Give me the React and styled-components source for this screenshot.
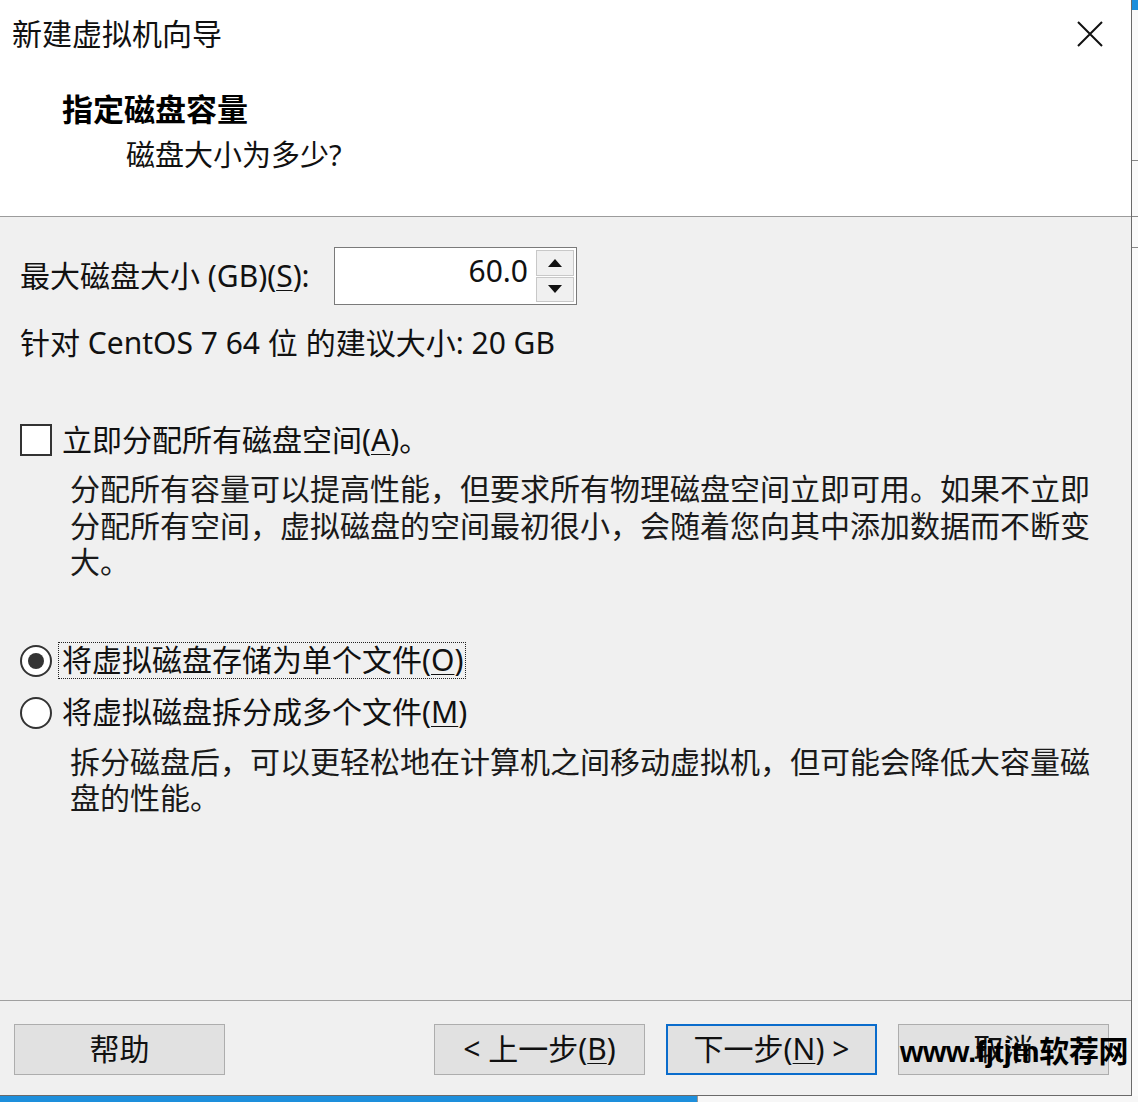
import React from "react";
import styled, { createGlobalStyle } from "styled-components";

const Global = createGlobalStyle`
  html, body { margin: 0; padding: 0; background: #f4f4f4; }
  body { font-family: "Noto Sans", "Noto Sans CJK SC", sans-serif; color: #111; }
  * { box-sizing: border-box; }
`;

const Screen = styled.div`
  width: 1138px;
  height: 1102px;
  display: flex;
  flex-direction: column;
  overflow: hidden;
  background: #f4f4f4;
`;

const Upper = styled.div`
  display: flex;
  height: 1096px;
`;

const Dialog = styled.div`
  position: relative;
  width: 1132px;
  height: 1096px;
  display: flex;
  flex-direction: column;
  background: #f0f0f0;
  border-right: 1px solid #6a6a6a;
  border-bottom: 1px solid #6a6a6a;
`;

const RightEdge = styled.div`
  flex: 1;
  display: flex;
  flex-direction: column;
  background: #fafafa;
`;

const EdgeMark = styled.div`
  height: ${(p) => p.$h}px;
  margin-top: ${(p) => p.$mt}px;
  background: ${(p) => p.$c};
`;

const Header = styled.div`
  height: 217px;
  background: #ffffff;
  border-bottom: 1px solid #9c9c9c;
  display: flex;
  flex-direction: column;
`;

const TitleBar = styled.div`
  height: 70px;
  display: flex;
  align-items: center;
  justify-content: space-between;
  padding: 0 28px 0 12px;
`;

const Title = styled.div`
  font-size: 30px;
  line-height: 36px;
  padding-bottom: 2px;
  color: #111;
`;

const CloseBox = styled.div`
  width: 26px;
  height: 26px;
  display: flex;
  margin-top: -2px;
`;

const PageTitle = styled.div`
  margin: 21px 0 0 62px;
  font-size: 31px;
  line-height: 36px;
  font-weight: 700;
  color: #000;
`;

const PageSubtitle = styled.div`
  margin: 10px 0 0 126px;
  font-size: 29px;
  line-height: 36px;
  color: #111;
`;

const Body = styled.div`
  flex: 1;
  display: flex;
  flex-direction: column;
  padding: 30px 0 0 20px;
`;

const SizeRow = styled.div`
  display: flex;
  align-items: center;
  height: 58px;
`;

const FieldLabel = styled.div`
  width: 314px;
  flex-shrink: 0;
  font-size: 30px;
  line-height: 36px;
  white-space: nowrap;
`;

const Mn = styled.span`
  text-decoration: underline;
  text-underline-offset: 3px;
  text-decoration-thickness: 1px;
`;

const SpinBox = styled.div`
  width: 243px;
  height: 58px;
  display: flex;
  align-items: center;
  background: #fff;
  border: 1px solid #7a7a7a;
  padding: 2px;
`;

const SpinValue = styled.div`
  flex: 1;
  text-align: right;
  padding: 0 8px 10px 0;
  font-size: 30px;
  line-height: 36px;
`;

const SpinButtons = styled.div`
  width: 38px;
  height: 52px;
  display: flex;
  flex-direction: column;
  gap: 1px;
`;

const SpinBtn = styled.div`
  flex: 1;
  display: flex;
  align-items: center;
  justify-content: center;
  background: #f0f0f0;
  border: 1px solid #c8c8c8;
`;

const Line = styled.div`
  margin-top: ${(p) => p.$mt || 0}px;
  margin-left: ${(p) => p.$ml || 0}px;
  font-size: 30px;
  line-height: 36px;
  white-space: nowrap;
`;

const OptionRow = styled.div`
  display: flex;
  align-items: center;
  height: 36px;
  margin-top: ${(p) => p.$mt}px;
`;

const CheckBox = styled.div`
  width: 32px;
  height: 32px;
  border: 2px solid #333;
  background: #fff;
  flex-shrink: 0;
  margin-right: 10px;
`;

const Radio = styled.div`
  width: 32px;
  height: 32px;
  border-radius: 50%;
  border: 2px solid #333;
  background: #fff;
  flex-shrink: 0;
  display: flex;
  align-items: center;
  justify-content: center;
  margin-right: ${(p) => (p.$focus ? 6 : 10)}px;
  &::after {
    content: "";
    width: 16px;
    height: 16px;
    border-radius: 50%;
    background: #333;
    display: ${(p) => (p.$checked ? "block" : "none")};
  }
`;

const OptionLabel = styled.div`
  font-size: 30px;
  line-height: 33px;
  white-space: nowrap;
  padding: 0 2px 2px ${(p) => (p.$focus ? 3 : 0)}px;
  border: ${(p) => (p.$focus ? "1px dotted #222" : "none")};
`;

const Para = styled.div`
  margin: ${(p) => p.$mt}px 0 0 50px;
  width: 1030px;
  font-size: 30px;
  line-height: 36.5px;
  color: #1a1a1a;
`;

const Footer = styled.div`
  height: 95px;
  border-top: 1px solid #a0a0a0;
  display: flex;
  align-items: flex-start;
  padding: 23px 22px 0 14px;
`;

const ButtonGroup = styled.div`
  margin-left: auto;
  display: flex;
  gap: 21px;
`;

const Button = styled.div`
  width: 211px;
  height: 51px;
  display: flex;
  align-items: center;
  justify-content: center;
  padding-bottom: 1px;
  background: #e1e1e1;
  border: ${(p) => (p.$default ? "2px solid #0a6ccc" : "1px solid #adadad")};
  font-size: 30px;
  line-height: 36px;
  color: #111;
  white-space: nowrap;
`;

const Watermark = styled.div`
  position: absolute;
  left: 900px;
  top: 1035px;
  font-family: "Liberation Sans", "Noto Sans CJK SC", sans-serif;
  font-size: 30px;
  font-weight: 700;
  line-height: 34px;
  color: #000;
  white-space: nowrap;
  letter-spacing: -0.3px;
`;

const Taskbar = styled.div`
  height: 6px;
  display: flex;
`;

const TaskBlue = styled.div`
  width: 697px;
  background: #1d8fdc;
`;

const TaskRest = styled.div`
  flex: 1;
  background: #f7f7f7;
  border-left: 1px solid #999;
`;

const Close = () => (
  <svg width="26" height="26" viewBox="0 0 26 26">
    <path d="M1 1 L25 25 M25 1 L1 25" stroke="#111" strokeWidth="2" fill="none" />
  </svg>
);

const Arrow = ({ up }) => (
  <svg width="14" height="8" viewBox="0 0 14 8">
    <path d={up ? "M0 8 L7 0 L14 8 Z" : "M0 0 L14 0 L7 8 Z"} fill="#111" />
  </svg>
);

export default function App() {
  return (
    <>
      <Global />
      <Screen>
        <Upper>
          <Dialog>
            <Header>
              <TitleBar>
                <Title>新建虚拟机向导</Title>
                <CloseBox>
                  <Close />
                </CloseBox>
              </TitleBar>
              <PageTitle>指定磁盘容量</PageTitle>
              <PageSubtitle>磁盘大小为多少?</PageSubtitle>
            </Header>
            <Body>
              <SizeRow>
                <FieldLabel>
                  最大磁盘大小 (GB)(<Mn>S</Mn>):
                </FieldLabel>
                <SpinBox>
                  <SpinValue>60.0</SpinValue>
                  <SpinButtons>
                    <SpinBtn>
                      <Arrow up />
                    </SpinBtn>
                    <SpinBtn>
                      <Arrow />
                    </SpinBtn>
                  </SpinButtons>
                </SpinBox>
              </SizeRow>
              <Line $mt={20}>针对 CentOS 7 64 位 的建议大小: 20 GB</Line>
              <OptionRow $mt={61}>
                <CheckBox />
                <OptionLabel>
                  立即分配所有磁盘空间(<Mn>A</Mn>)。
                </OptionLabel>
              </OptionRow>
              <Para $mt={13}>
                分配所有容量可以提高性能，但要求所有物理磁盘空间立即可用。如果不立即分配所有空间，虚拟磁盘的空间最初很小，会随着您向其中添加数据而不断变大。
              </Para>
              <OptionRow $mt={62}>
                <Radio $checked $focus />
                <OptionLabel $focus>
                  将虚拟磁盘存储为单个文件(<Mn>O</Mn>)
                </OptionLabel>
              </OptionRow>
              <OptionRow $mt={16}>
                <Radio />
                <OptionLabel>
                  将虚拟磁盘拆分成多个文件(<Mn>M</Mn>)
                </OptionLabel>
              </OptionRow>
              <Para $mt={13}>
                拆分磁盘后，可以更轻松地在计算机之间移动虚拟机，但可能会降低大容量磁盘的性能。
              </Para>
            </Body>
            <Footer>
              <Button>帮助</Button>
              <ButtonGroup>
                <Button>
                  &lt; 上一步(<Mn>B</Mn>)
                </Button>
                <Button $default>
                  下一步(<Mn>N</Mn>) &gt;
                </Button>
                <Button>取消</Button>
              </ButtonGroup>
            </Footer>
            <Watermark>www.fjtjtn软荐网</Watermark>
          </Dialog>
          <RightEdge>
            <EdgeMark $h={10} $mt={0} $c="#1d8fdc" />
            <EdgeMark $h={1} $mt={150} $c="#888" />
            <EdgeMark $h={1} $mt={55} $c="#888" />
            <EdgeMark $h={1} $mt={30} $c="#888" />
          </RightEdge>
        </Upper>
        <Taskbar>
          <TaskBlue />
          <TaskRest />
        </Taskbar>
      </Screen>
    </>
  );
}
